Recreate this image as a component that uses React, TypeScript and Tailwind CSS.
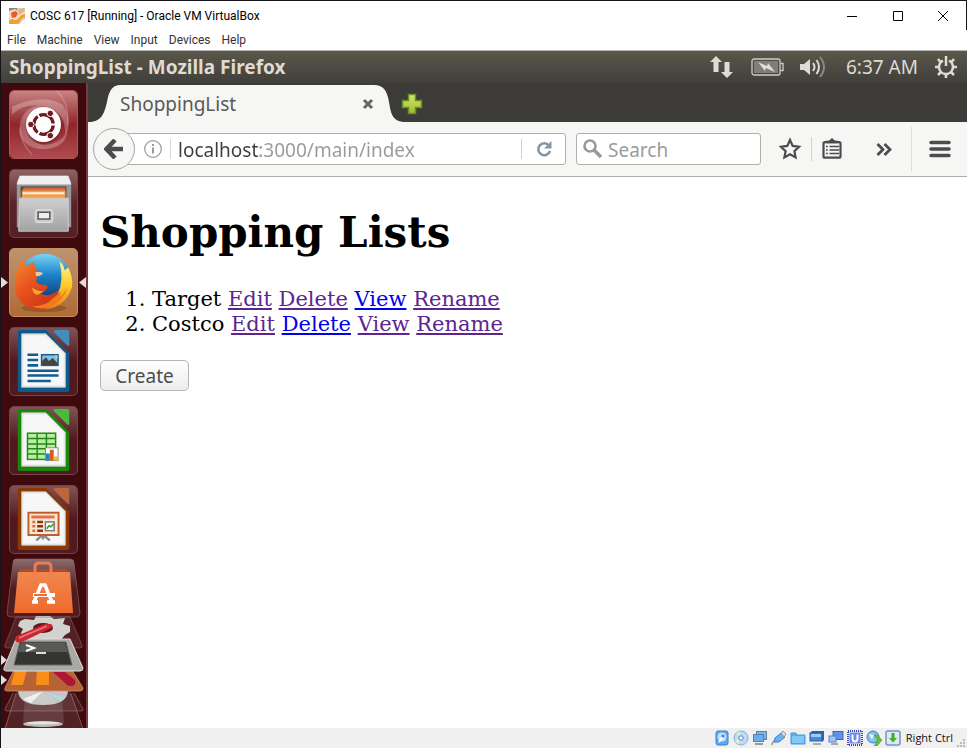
import React from "react";

const UI = "font-['Noto_Sans','Open_Sans',sans-serif]";

const lists = [
  { name: "Target", fresh: "View" },
  { name: "Costco", fresh: "Delete" },
];
const actions = ["Edit", "Delete", "View", "Rename"];
const menus = ["File", "Machine", "View", "Input", "Devices", "Help"];

function TitleBar() {
  return (
    <header className="flex h-[30px] items-center border-t border-r border-[#17131a] bg-white">
      <svg className="ml-2 mr-[5px] size-4" viewBox="0 0 16 16" aria-hidden="true">
        <rect width="16" height="16" fill="#d8cbb8" />
        <path d="M0 0h8v3H0z" fill="#8a8580" />
        <path d="M0 3l6-2 5 4-3 5-8 1z" fill="#e9dccb" />
        <path d="M2 5l4-2 3 2-2 4-4 1z" fill="#f0591b" />
        <path d="M9 3l6-3v3l-4 3z" fill="#f2b066" />
        <path d="M0 16v-4q3-3 5-1t5-2q1-3 6-4v4q-4 1-5 4-1 3-4 3z" fill="#f0a030" />
        <path d="M11 16q1-4 5-5v5z" fill="#fbf3e6" />
        <path d="M0 12q3-3 5-1t5-2q1-3 6-4" stroke="#fff4df" fill="none" />
      </svg>
      <h1 className="flex-1 font-['Roboto',sans-serif] text-[12px] leading-4 text-black">COSC 617 [Running] - Oracle VM VirtualBox</h1>
      <button aria-label="Minimize" className="flex h-full w-[46px] items-center justify-center">
        <svg width="10" height="10" shapeRendering="crispEdges"><path d="M0 5.5h10" stroke="#000" /></svg>
      </button>
      <button aria-label="Maximize" className="flex h-full w-[45px] items-center justify-center">
        <svg width="10" height="10"><path d="M.5.5h9v9h-9z" stroke="#000" fill="none" /></svg>
      </button>
      <button aria-label="Close" className="flex h-full w-[46px] items-center justify-center">
        <svg width="10" height="10"><path d="M0 0l10 10M10 0L0 10" stroke="#000" /></svg>
      </button>
    </header>
  );
}

function MenuBar() {
  return (
    <nav className="flex h-[21px] items-center gap-[11px] border-b border-[#b5b3ae] bg-white pl-[6px] font-['Roboto',sans-serif] text-[12px] leading-4 text-[#333]">
      {menus.map((m) => (
        <button key={m}>{m}</button>
      ))}
    </nav>
  );
}

function Panel() {
  return (
    <div className="flex h-8 items-center bg-linear-to-b from-[#5a574c] to-[#403f3a] pl-2 pr-[10px] text-[#dfdbd2]">
      <strong className="flex-1 text-[19px] leading-6 font-bold">ShoppingList - Mozilla Firefox</strong>
      <svg className="mr-[18px]" width="24" height="24" viewBox="0 0 24 24" fill="#dfdbd2" aria-label="Network">
        <path d="M7 1l6 6H9.500v10h-5V7H1z" />
        <path d="M18 23l-6-6h3.500V7h5v10H24z" />
      </svg>
      <svg className="mr-4" width="33" height="18" viewBox="0 0 33 18" aria-label="Battery">
        <rect x="1" y="1" width="28" height="16" rx="2" fill="none" stroke="#cfccc4" strokeWidth="1.300" />
        <rect x="3" y="3" width="24" height="12" fill="#7f7d75" />
        <path d="M29.500 5.500H32v7h-2.500" fill="none" stroke="#cfccc4" strokeWidth="1.300" />
        <path d="M7 4l9 4 1-3 7 9-9-4-1 3z" fill="#e0ddd6" />
      </svg>
      <svg className="mr-5" width="26" height="24" viewBox="0 0 26 24" aria-label="Volume">
        <path d="M0 9h4l6-5v16l-6-5H0z" fill="#dfdbd2" />
        <path d="M13 8q3 4 0 8M16.500 5q5 7 0 14" stroke="#dfdbd2" strokeWidth="2" fill="none" />
        <path d="M20 2q8 10 0 20" stroke="#8b8981" strokeWidth="2" fill="none" />
      </svg>
      <time className="mr-[17px] text-[19px] leading-6">6:37 AM</time>
      <svg width="22" height="24" viewBox="-11 -12 22 24" aria-label="Session">
        <g fill="none" stroke="#dfdbd2">
          <path d="M-3-6.300A7 7 0 1 0 3-6.300" strokeWidth="2.400" />
          <path d="M0-11V-1" strokeWidth="2.500" />
          <path d="M7 0h4M-7 0h-4M0 7v4M5 5l3 3M-5 5l-3 3M5.500-5l2.500-3M-5.500-5l-2.500-3" strokeWidth="2.600" />
        </g>
      </svg>
    </div>
  );
}

function DocIcon({ main, fold, children }: { main: string; fold: string; children: React.ReactNode }) {
  return (
    <svg viewBox="0 0 69 69" className="size-full">
      <path d="M10 2h27l24 24v38q0 2-2 2H10q-2 0-2-2V4q0-2 2-2z" fill={main} />
      <path d="M12 6h25l20 20v35H12z" fill="#eeeeed" stroke="#bbb" strokeWidth="1" />
      <path d="M14 8h22l19 19v32H14z" fill="#fafafa" opacity=".75" />
      <path d="M46 2h13q2 0 2 2v14q-1 1-2 0L45 4q-1-1 1-2z" fill={fold} />
      {children}
    </svg>
  );
}

function Dash() {
  return (
    <svg viewBox="0 0 69 69" className="size-full">
      <defs>
        <linearGradient id="dash" x2="0" y2="1">
          <stop stopColor="#c98284" /><stop offset=".5" stopColor="#8f2529" /><stop offset="1" stopColor="#ae4c51" />
        </linearGradient>
      </defs>
      <rect width="69" height="69" rx="4" fill="url(#dash)" />
      <path d="M2 16Q34 2 54 14q12 16 2 36Q60 24 40 17 18 10 2 24zM10 44q-2-28 26-30Q17 20 18 40q7 20 26 14 12-4 15-14 0 18-23 20Q15 60 10 44z" fill="#fff" opacity=".25" />
      <path d="M10 38q1 16 13 28M48 0q14 12 11 36" stroke="#fff" strokeWidth="1.500" fill="none" opacity=".2" />
      <circle cx="34.500" cy="36.500" r="18.500" fill="#5a1117" opacity=".35" />
      <circle cx="34.500" cy="34.500" r="18" fill="#fff" />
      <circle cx="34.500" cy="34.500" r="10" fill="none" stroke="#701a20" strokeWidth="3.500" />
      <path d="M34.500 34.500H48M34.500 34.500l-7-12M34.500 34.500l-7 12" stroke="#fff" strokeWidth="2" />
      <circle cx="34.500" cy="34.500" r="8.200" fill="#fff" />
      <g fill="#701a20" stroke="#fff" strokeWidth="1">
        <circle cx="21.500" cy="34.500" r="3.300" /><circle cx="41.500" cy="23" r="3.300" /><circle cx="41.500" cy="46" r="3.300" />
      </g>
    </svg>
  );
}

function Files() {
  return (
    <svg viewBox="0 0 69 69" className="size-full">
      <defs>
        <linearGradient id="cab" x2="0" y2="1"><stop stopColor="#d0d0d0" /><stop offset="1" stopColor="#a2a2a2" /></linearGradient>
      </defs>
      <path d="M10 6h50l3 6v47H7V12z" fill="#999" />
      <path d="M10 6h50l3 9H7z" fill="#f0f0f0" />
      <path d="M11 17h47v15H11z" fill="#4b4543" />
      <path d="M14 18h43v12H12v-8z" fill="#d9693e" />
      <path d="M13 21h44v8H12z" fill="#f0a04b" />
      <path d="M13 23h43v2H13z" fill="#fff3dd" />
      <path d="M10 29h50v34H9z" fill="url(#cab)" stroke="#ccc" />
      <rect x="26" y="41" width="18" height="13" rx="2" fill="#ccc" stroke="#e2e2e2" />
      <rect x="29" y="43.500" width="12" height="7" fill="#eee" stroke="#555" strokeWidth="1.500" />
    </svg>
  );
}

function Firefox() {
  return (
    <svg viewBox="0 0 69 69" className="size-full">
      <defs>
        <linearGradient id="globe" x2="0" y2="1"><stop stopColor="#79d4f4" /><stop offset=".4" stopColor="#1c83c9" /><stop offset="1" stopColor="#102664" /></linearGradient>
        <linearGradient id="fox" x2=".8" y2="1"><stop stopColor="#f18a2e" /><stop offset=".5" stopColor="#e8501d" /><stop offset="1" stopColor="#c7341a" /></linearGradient>
        <linearGradient id="tail" x2="0" y2="1"><stop stopColor="#fff58a" /><stop offset=".5" stopColor="#fbcb26" /><stop offset="1" stopColor="#ef7c1e" /></linearGradient>
      </defs>
      <ellipse cx="35" cy="61" rx="23" ry="4" fill="#6b3a14" opacity=".4" />
      <circle cx="36" cy="32" r="27" fill="url(#globe)" />
      <path d="M51 13q5 4 5 9l4-3q5 10 4 20-4 15-18 21-11 4-20 0 17-1 23-14 7-13 2-33z" fill="url(#tail)" />
      <path d="M9 19l2-8 5 6q6-1 8-4l3 8q2 0 1 4l-1 9q4 4 10 3 3 1 1 4-4 5-9 4 10 6 20-2 3 4-3 9-3 8-11 10Q12 64 6 45 3 28 9 19z" fill="url(#fox)" />
      <path d="M23 40q6 5 12 3-4 4-8 4-4-2-4-7z" fill="#f7a437" />
      <path d="M26 24q6-1 8 1-2 3-7 3z" fill="#f1c89d" />
      <path d="M44 51l8-7v6l7-10q-4 14-18 20-10 3-18-1 14 0 21-8z" fill="#f07a1c" />
    </svg>
  );
}

function Writer() {
  return (
    <DocIcon main="#0d5b8d" fold="#448cbc">
      <g stroke="#125e90" strokeWidth="2.600"><path d="M18 27.500h11M18 33h11M18 38.500h11M18 44h32M18 49h32M18 54.500h24" /></g>
      <rect x="32.500" y="27.500" width="17" height="11" fill="#83c3e9" stroke="#125e90" strokeWidth="1.500" />
      <path d="M46 28h3v4z" fill="#f4c63b" /><path d="M33 38v-4l4-4 3 4 4-3 5 5v2z" fill="#454545" />
    </DocIcon>
  );
}

function Calc() {
  return (
    <DocIcon main="#18870a" fold="#4db83e">
      <rect x="18" y="27" width="29" height="27" fill="#b8ee9f" stroke="#268617" strokeWidth="1.500" />
      <path d="M18 32.500h29M18 38h29M18 43h29M18 48.500h29M28 27v27M37.500 27v27" stroke="#268617" strokeWidth="1.500" />
      <rect x="36.500" y="42" width="13" height="13" fill="#fff" stroke="#888" />
      <path d="M37 48h4v7h-4z" fill="#2387c5" /><path d="M41 44h4v11h-4z" fill="#d35c22" /><path d="M45 51h4v4h-4z" fill="#f3bb20" />
    </DocIcon>
  );
}

function Impress() {
  return (
    <DocIcon main="#8b3805" fold="#ba653a">
      <path d="M34 50l-7 6M34 50l7 6M34 50v5" stroke="#8a8a8a" strokeWidth="2.500" />
      <rect x="19" y="27.500" width="31" height="23" fill="#fbe6da" stroke="#c35b24" strokeWidth="2" />
      <path d="M22 32h24" stroke="#e17643" strokeWidth="3" />
      <path d="M23 37h3M23 41.500h3M23 46h3" stroke="#dd6e37" strokeWidth="2.500" />
      <path d="M28 37h6M28 41.500h6M28 46h6" stroke="#8e3508" strokeWidth="2.500" />
      <rect x="36.500" y="37" width="9" height="9" fill="#fff" stroke="#777" strokeWidth="1.500" />
      <path d="M38 44l2-3 2 1 3-3" stroke="#35a322" strokeWidth="1.500" fill="none" />
    </DocIcon>
  );
}

/* Folded tail of the launcher: software bag, settings, terminal, tools and disc */
function LauncherStack() {
  return (
    <svg width="85" height="175" viewBox="0 2 85 175" className="block shrink-0" aria-hidden="true">
      <defs>
        <linearGradient id="bag" x2="0" y2="1"><stop stopColor="#ef8751" /><stop offset="1" stopColor="#f06a2a" /></linearGradient>
        <linearGradient id="shine" x2="0" y2="1"><stop stopColor="#fff" stopOpacity=".4" /><stop offset=".5" stopColor="#fff" stopOpacity=".08" /></linearGradient>
      </defs>
      <path d="M23 115h39l20 62H3z" fill="#fff" opacity=".1" />
      <path d="M24 145h37l2 26H22z" fill="#ccc" opacity=".16" />
      <path d="M15 142L4 177M70 142l12 35M12 141L4 157q0 2 2 2h74q3 0 2-2l-9-16" fill="#fff" fillOpacity=".08" stroke="#b98183" strokeOpacity=".5" />
      <ellipse cx="42" cy="172" rx="20" ry="3" fill="#b9bdb8" /><ellipse cx="42" cy="171" rx="17" ry="1.500" fill="#e1e4df" />
      <path d="M17 139h50q-1 14-25 14t-25-14z" fill="#c9cbc8" />
      <path d="M42 139l24 3q-2 5-9 8z" fill="#d5b7da" /><path d="M42 139l22 7-5 3z" fill="#a7e3ce" /><path d="M42 139l-20 8 8 4z" fill="#f1f1f0" />
      <path d="M13 118h58l11 18q0 3-3 3H6q-3 0-2-3z" fill="#b56336" stroke="#d69366" strokeWidth=".8" />
      <path d="M14 118h12l-4 15H10zM36 118h12v15H35z" fill="#fa8d19" />
      <path d="M52 120h12l10 8q2 6-5 6-3 0-5-3z" fill="#ad1635" />
      <path d="M15 65L4 93q-1 3 2 3h73q3 0 2-3L69 65z" fill="#fff" fillOpacity=".1" stroke="#a66569" strokeOpacity=".5" />
      <path d="M24 67l9 1 2-4h14l4 3 11-1-2 6 7 2v6l-5 3-6 7-9-1-5 3H35l-2-3-9-1-4-7 2-4-5-3 2-5z" fill="#d2d2cf" />
      <ellipse cx="42" cy="76" rx="10" ry="5" fill="#66181b" />
      <path d="M15 87h54l13 29q0 3-3 3H6q-4 0-3-3z" fill="#aaa9a6" stroke="#dedede" />
      <path d="M19 90h46l6 23H13z" fill="#343532" stroke="#666" />
      <path d="M20 91h44l3 9H17z" fill="#777874" opacity=".55" />
      <path d="M50 72q3 2 0 4L21 90q-5 2-7-2 0-4 4-5l26-11z" fill="#cb2632" />
      <path d="M18 86l28-12" stroke="#ee777a" strokeWidth="1.500" />
      <path d="M25 93l8 3-8 3" stroke="#fff" strokeWidth="2" fill="none" /><path d="M35 101h10" stroke="#ddd" strokeWidth="2" />
      <path d="M0 103l6 5-6 5M0 123l6 5-6 5" fill="#e2dddb" />
      <path d="M15 7h54q4 0 4 4l6 50q0 4-4 4H10q-4 0-4-4l6-50q0-4 3-4z" fill="url(#shine)" stroke="#916467" strokeOpacity=".6" />
      <path d="M19 17h47l1 4H17z" fill="#b84824" />
      <path d="M17 20h52l3 41H13z" fill="url(#bag)" />
      <path d="M34 23v-8q0-4 4-4h8q4 0 4 4v8" stroke="#ef7b4f" strokeWidth="3" fill="none" />
      <path d="M31 50h6M46 50h8M33 50l7-17h4l7 17" stroke="#fff" strokeWidth="3.500" fill="none" />
      <path d="M32 43h22" stroke="#fff" strokeWidth="4" /><path d="M33 43h13" stroke="#ee6f35" strokeWidth="2" />
    </svg>
  );
}

const docTile = "border-[#744247] bg-linear-to-b from-[#805357] via-[#52171c] to-[#501c21]";
const apps = [
  { name: "Dash", el: <Dash />, tile: "border-[#ad5659]" },
  { name: "Files", el: <Files />, tile: "border-[#744247] bg-linear-to-b from-[#8e6266] via-[#5b2227] to-[#552026]" },
  { name: "Firefox", el: <Firefox />, tile: "border-[#c58f60] bg-linear-to-b from-[#bd9370] to-[#b06b35]" },
  { name: "Writer", el: <Writer />, tile: docTile },
  { name: "Calc", el: <Calc />, tile: docTile },
  { name: "Impress", el: <Impress />, tile: docTile },
];

function Launcher() {
  return (
    <aside className="flex w-[87px] shrink-0 flex-col overflow-hidden border-r-2 border-[#7d393d] bg-[#3f0a0d]">
      <div className="flex flex-col gap-[10px] pt-[7px] pl-2">
        {apps.map((a) => (
          <div key={a.name} className="relative size-[69px]">
            <button aria-label={a.name} className={"block size-full overflow-hidden rounded-[5px] border " + a.tile}>
              {a.el}
            </button>
            {a.name === "Firefox" && (
              <>
                <svg className="absolute -left-2 top-[29px]" width="7" height="11"><path d="M0 0l7 5.500L0 11z" fill="#e2dddb" /></svg>
                <svg className="absolute -right-2 top-[29px]" width="7" height="11"><path d="M7 0L0 5.500 7 11z" fill="#e2dddb" /></svg>
              </>
            )}
          </div>
        ))}
      </div>
      <LauncherStack />
    </aside>
  );
}

function TabStrip() {
  return (
    <div className="flex h-[39px] items-end bg-[#3c3b37]">
      <svg width="32" height="37" viewBox="0 0 32 37"><path d="M0 37C13 37 16 30 19 17 21 5 25 0 32 0V37z" fill="#f6f6f5" /></svg>
      <div className="flex h-[37px] w-[254px] items-center justify-between bg-[#f6f6f5] text-[#5a5a5a]">
        <button className="text-[19px] leading-6">ShoppingList</button>
        <button aria-label="Close tab">
          <svg width="12" height="12"><path d="M2 2l8 8M10 2l-8 8" stroke="#666" strokeWidth="3" /></svg>
        </button>
      </div>
      <svg width="32" height="37" viewBox="0 0 32 37"><path d="M32 37C19 37 17 30 15 17 13 5 9 0 0 0V37z" fill="#f6f6f5" /></svg>
      <button aria-label="New tab" className="-ml-[5px] mb-[7px]">
        <svg width="22" height="22" viewBox="0 0 22 22">
          <defs><linearGradient id="plus" x2="0" y2="1"><stop stopColor="#d3e76c" /><stop offset="1" stopColor="#9bbd2c" /></linearGradient></defs>
          <path d="M7.500 1.500h7v6h6v7h-6v6h-7v-6h-6v-7h6z" fill="url(#plus)" stroke="#698f27" strokeWidth="1.500" />
        </svg>
      </button>
    </div>
  );
}

function NavBar() {
  return (
    <div className="flex h-[55px] items-center border-b border-[#b0ada7] bg-[#f6f6f5] pl-[5px]">
      <button aria-label="Back" className="z-10 flex size-[42px] shrink-0 items-center justify-center rounded-full border border-[#aaa69f] bg-[#f6f6f5]">
        <svg width="20" height="20" viewBox="0 0 20 20"><path d="M11 1L2.500 10 11 19M3 10h16" stroke="#4c4c4c" strokeWidth="4.500" fill="none" /></svg>
      </button>
      <div className="-ml-[10px] flex h-8 min-w-0 flex-1 items-center rounded-[3px] border border-[#b3aea7] bg-white pl-[18px]">
        <svg width="18" height="18" viewBox="0 0 18 18" className="shrink-0">
          <circle cx="9" cy="9" r="8.300" fill="none" stroke="#999" strokeWidth="1.200" /><path d="M9 7.500v6M9 4v2" stroke="#999" strokeWidth="2" />
        </svg>
        <span className="ml-2 h-5 w-px bg-[#d8d8d8]" />
        <input
          aria-label="Address"
          defaultValue="localhost:3000/main/index"
          className="ml-[7px] h-[30px] min-w-0 flex-1 bg-linear-[90deg,#3d3d3d_82px,#999_82px] bg-clip-text pt-0.5 text-[19px] leading-7 text-transparent outline-none"
        />
        <span className="h-5 w-px bg-[#d0d0d0]" />
        <button aria-label="Reload" className="flex w-[43px] justify-center">
          <svg width="18" height="18" viewBox="0 0 18 18"><path d="M14 5.500A6 6 0 1 0 15 11" stroke="#8796a5" strokeWidth="2.600" fill="none" /><path d="M16.500 1v7.500H9z" fill="#8796a5" /></svg>
        </button>
      </div>
      <label className="ml-[10px] flex h-8 w-[185px] items-center rounded-[3px] border border-[#b3aea7] bg-white pl-[6px]">
        <svg width="20" height="20" viewBox="0 0 20 20" className="mr-[5px] shrink-0"><circle cx="7" cy="7" r="5.500" stroke="#999" strokeWidth="2.600" fill="none" /><path d="M11 11l7 7" stroke="#999" strokeWidth="3.500" /></svg>
        <input aria-label="Search" placeholder="Search" className="h-[30px] min-w-0 flex-1 pt-0.5 text-[19px] leading-7 outline-none placeholder:text-[#9b9b9b]" />
      </label>
      <button aria-label="Bookmark" className="ml-[9px] flex w-10 justify-center">
        <svg width="24" height="24" viewBox="0 0 24 24"><path d="M12 3l2.700 5.900 6.300.8-4.600 4.400 1.200 6.300L12 17.300l-5.600 3.100 1.200-6.300L3 9.700l6.300-.8z" fill="none" stroke="#4c4c4c" strokeWidth="2.200" /></svg>
      </button>
      <span className="ml-px h-6 w-px bg-[#d1d0ce]" />
      <button aria-label="Bookmarks list" className="flex w-10 justify-center">
        <svg width="20" height="22" viewBox="0 0 20 22">
          <path d="M6 3.500L10 0l4 3.500z" fill="#4c4c4c" /><rect x="1.500" y="4.200" width="17" height="15.500" rx="1.500" fill="none" stroke="#4c4c4c" strokeWidth="2.200" />
          <path d="M4 4h12" stroke="#4c4c4c" strokeWidth="2.600" /><path d="M4 8.500h1.800M4 12h1.800M4 15.500h1.800M7.500 8.500H17M7.500 12H17M7.500 15.500H17" stroke="#4c4c4c" strokeWidth="1.500" />
        </svg>
      </button>
      <button aria-label="More tools" className="ml-1 flex w-[55px] justify-center">
        <svg width="16" height="13" viewBox="0 0 16 13"><path d="M1.500 1L7 6.500 1.500 12M8.500 1L14 6.500 8.500 12" stroke="#4c4c4c" strokeWidth="2.800" fill="none" /></svg>
      </button>
      <span className="h-11 w-px bg-[#dddcda]" />
      <button aria-label="Open menu" className="flex w-[55px] justify-center">
        <svg width="22" height="18" viewBox="0 0 22 18"><path d="M2 2.500h18M2 9h18M2 15.500h18" stroke="#4c4c4c" strokeWidth="3.500" strokeLinecap="round" /></svg>
      </button>
    </div>
  );
}

function Page() {
  return (
    <main className="flex-1 bg-white px-3 pt-[31px] font-['DejaVu_Serif',serif] text-black">
      <h1 className="text-[42px] leading-[50px] font-bold">Shopping Lists</h1>
      <ol className="mt-[29px] list-decimal pl-[52px] text-[21px] leading-[25px]">
        {lists.map((l) => (
          <li key={l.name}>
            {l.name}
            {actions.map((a) => (
              <React.Fragment key={a}>
                {" "}
                <a href={"#" + a} className={a === l.fresh ? "text-[#0000ee] underline" : "text-[#5c2590] underline"}>{a}</a>
              </React.Fragment>
            ))}
          </li>
        ))}
      </ol>
      <button className="mt-[23px] block h-[31px] w-[89px] rounded-[5px] border border-[#b8b5b0] bg-linear-to-b from-white to-[#ededec] font-['Noto_Sans','Open_Sans',sans-serif] text-[19px] leading-6 text-[#4c4c4c]">Create</button>
    </main>
  );
}

function StatusBar() {
  const b = "#3d7fc9";
  const icons = [
    <><rect x="2" y="1" width="12" height="14" rx="2" fill="#5fa9ec" stroke={b} /><circle cx="8" cy="7" r="4.500" fill="#c4e2fc" /><path d="M5 12l4-5" stroke="#fff" strokeWidth="2" /><circle cx="9" cy="6" r="1.500" fill={b} /></>,
    <><circle cx="8" cy="8" r="7" fill="#bcdcf7" stroke="#7caede" /><path d="M8 8L3 3l4-2z" fill="#cdf0c0" /><path d="M8 8l6 3-3 3z" fill="#e4c7f1" /><path d="M8 8l-6 3 3 3z" fill="#f5efb0" /><circle cx="8" cy="8" r="2.200" fill="#fff" stroke={b} /></>,
    <><rect x="4.500" y="1.500" width="10" height="8" fill="#7ab7ed" stroke="#5f7fa8" /><rect x="1.500" y="4.500" width="10" height="7" fill="#6aaef0" stroke="#5f7fa8" /><path d="M3 14h8" stroke="#999" strokeWidth="2" /></>,
    <><path d="M1 15q0-3 3-4" stroke="#999" strokeWidth="1.500" fill="none" /><path d="M3 12l1-4 6-5 4 4-6 5z" fill="#6fb0ee" stroke={b} /><path d="M10 3l2-2 3 3-2 3z" fill="#ddd" stroke="#999" /></>,
    <><path d="M1 3h5l1 2h8v9H1z" fill="#58ace9" stroke="#4d9ddc" /><path d="M2 6h12v7H2z" fill="#82c8f8" /></>,
    <><path d="M3 1h12v9l-2 2V3H1z" fill="#2b62b0" /><rect x="1" y="3" width="12" height="8" fill="#3b8ae8" stroke="#315c94" /><path d="M2 4h10v3H2z" fill="#9dcaf7" /><path d="M4 14h8" stroke="#aaa" strokeWidth="2" /></>,
    <><rect x="5" y="1.500" width="10" height="8" fill="#5f93ea" stroke="#4266b3" /><rect x="1" y="6" width="7" height="6" fill="#9bc6f5" stroke="#5b7fc4" /><path d="M3 14h7" stroke="#aaa" strokeWidth="2" /></>,
    <><rect x="1" y="1" width="14" height="14" fill="none" stroke="#394cae" strokeWidth="2" strokeDasharray="1 1" /><rect x="2.500" y="2.500" width="11" height="11" fill="#7089e4" /><path d="M5.500 4.500v4q0 3 2.500 3t2.500-3v-4" stroke="#fff" strokeWidth="2" fill="none" /></>,
    <><circle cx="7" cy="7" r="6" fill="#85bfea" stroke={b} /><path d="M3 4l5 1-2 5z" fill="#e8f6ff" /><path d="M8 5h3l5 5-5 6H8l4-6z" fill="#66c13b" stroke="#4b9d2d" strokeWidth=".7" /></>,
    <><rect x="1" y="1" width="14" height="14" rx="2" fill="#dce9f5" stroke="#7394bd" strokeWidth="1.500" /><path d="M6.500 3h3v5H12l-4 4.500L4 8h2.500z" fill="#45aa32" /></>,
  ];
  return (
    <footer className="flex h-5 items-center justify-end bg-[#f0f0f0] pr-px font-['Open_Sans',sans-serif] text-[#111]">
      <div className="flex gap-[3px]">
        {icons.map((g, i) => (
          <svg key={i} width="16" height="16" viewBox="0 0 16 16" aria-hidden="true">{g}</svg>
        ))}
      </div>
      <span className="ml-[5px] text-[11px] leading-4">Right Ctrl</span>
      <svg className="ml-1 self-end" width="9" height="9" fill="#bbb"><path d="M6 0h2v2H6zM3 3h2v2H3zM6 3h2v2H6zM0 6h2v2H0zM3 6h2v2H3zM6 6h2v2H6z" /></svg>
    </footer>
  );
}

export default function App() {
  return (
    <div className={"flex h-screen flex-col border-l border-[#17131a] bg-white " + UI}>
      <TitleBar />
      <MenuBar />
      <Panel />
      <div className="flex min-h-0 flex-1">
        <Launcher />
        <div className="flex min-w-0 flex-1 flex-col">
          <TabStrip />
          <NavBar />
          <Page />
        </div>
      </div>
      <StatusBar />
    </div>
  );
}
